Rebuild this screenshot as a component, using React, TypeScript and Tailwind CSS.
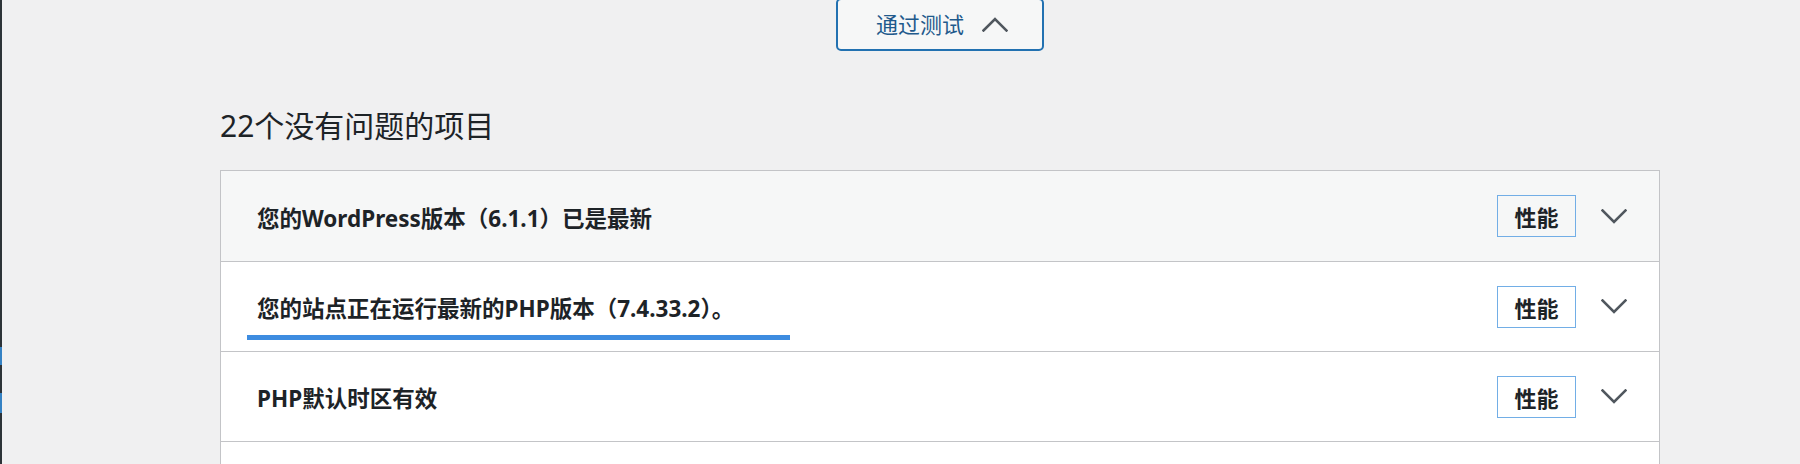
import React from 'react';

const font = { fontFamily: '"Noto Sans", "Noto Sans CJK SC", sans-serif' };

function ChevronDown() {
  return (
    <svg width="26" height="15" viewBox="0 0 26 15" fill="none">
      <path d="M1.5 1.5 L13 13 L24.5 1.5" stroke="#50575e" strokeWidth="2.6" strokeLinecap="square" />
    </svg>
  );
}

function ChevronUp() {
  return (
    <svg width="26" height="15" viewBox="0 0 26 15" fill="none">
      <path d="M1.5 13.5 L13 2 L24.5 13.5" stroke="#50575e" strokeWidth="2.6" strokeLinecap="square" />
    </svg>
  );
}

type Item = { title: string; highlighted?: boolean };

const items: Item[] = [
  { title: '您的WordPress版本（6.1.1）已是最新' },
  { title: '您的站点正在运行最新的PHP版本（7.4.33.2）。', highlighted: true },
  { title: 'PHP默认时区有效' },
];

function Row({ item, index }: { item: Item; index: number }) {
  return (
    <div
      className={`relative flex h-[90px] items-center pl-[36px] pr-[32px] ${
        index === 0 ? 'bg-[#f6f7f7]' : 'border-t border-[#c3c4c7] bg-white'
      }`}
    >
      <div className="flex-1 pt-[5px] text-[22.5px] font-bold text-[#1d2327]">{item.title}</div>
      <span className="flex h-[42px] w-[79px] items-center justify-center border border-[#72aee6] pt-[3px] text-[22px] font-bold text-[#1d2327]">
        性能
      </span>
      <span className="ml-[25px] flex">
        <ChevronDown />
      </span>
      {item.highlighted && (
        <div className="absolute left-[26px] top-[73px] h-[5px] w-[543px] bg-[#3d8ce0]" />
      )}
    </div>
  );
}

export default function App() {
  return (
    <div className="flex h-[464px] w-[1800px] overflow-hidden bg-[#f0f0f1]" style={font}>
      {/* admin menu edge */}
      <div className="flex w-[2px] flex-col bg-[#2c3338]">
        <div className="h-[347px]" />
        <div className="h-[18px] bg-[#3582c4]" />
        <div className="h-[28px]" />
        <div className="h-[20px] bg-[#3582c4]" />
      </div>

      <main className="flex-1 pl-[218px] pr-[140px]">
        <div className="flex justify-center">
          <button className="-mt-[2px] flex h-[53px] w-[208px] items-center justify-center gap-[18px] rounded-[5px] border-2 border-[#2271b1] bg-[#f6f7f7] pl-[4px] text-[22px] text-[#1f5a8c]">
            <span>通过测试</span>
            <ChevronUp />
          </button>
        </div>

        <h3 className="mt-[55px] text-[30px] leading-[39px] text-[#1d2327]">22个没有问题的项目</h3>

        <div className="mt-[25px] border border-[#c3c4c7] bg-white">
          {items.map((item, i) => (
            <Row key={i} item={item} index={i} />
          ))}
          <div className="h-[90px] border-t border-[#c3c4c7] bg-white" />
        </div>
      </main>
    </div>
  );
}
